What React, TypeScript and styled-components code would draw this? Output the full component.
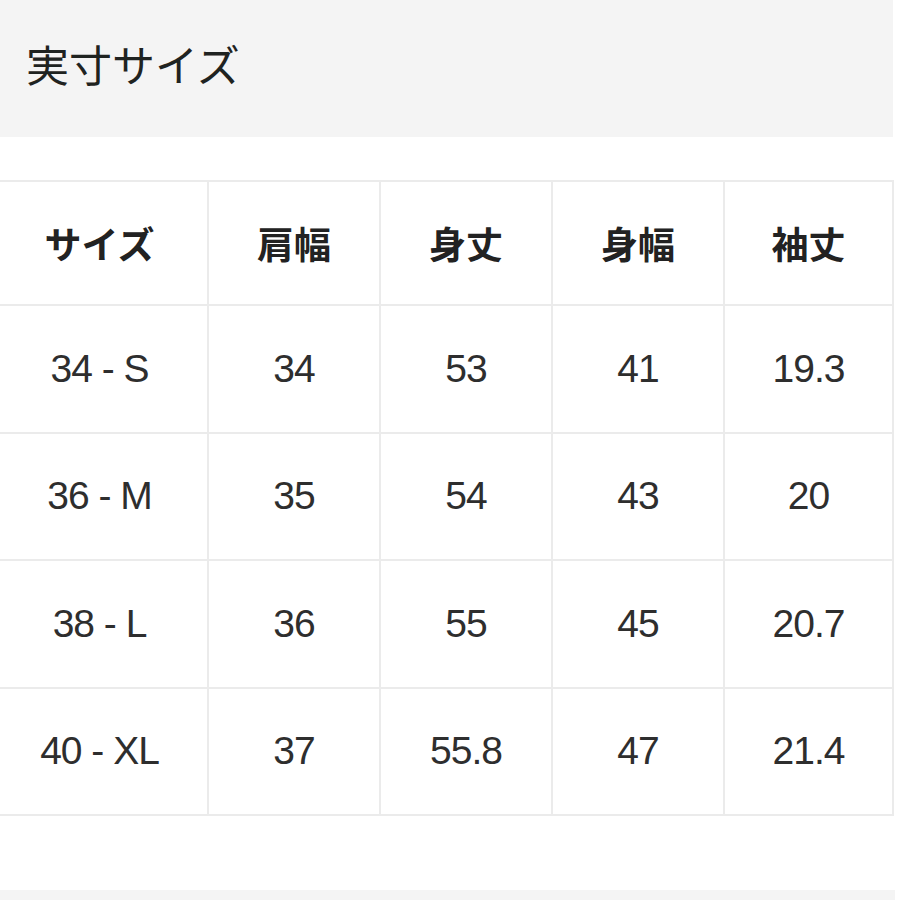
import React from "react";
import styled, { createGlobalStyle } from "styled-components";

const Global = createGlobalStyle`
  html, body {
    margin: 0;
    padding: 0;
    background: #ffffff;
    overflow-x: hidden;
  }
  body {
    font-family: "Liberation Sans", "Noto Sans CJK JP", sans-serif;
  }
`;

const Page = styled.div`
  width: 900px;
  min-height: 900px;
  overflow: hidden;
  display: flex;
  flex-direction: column;
`;

const TitleBar = styled.div`
  width: 893px;
  height: 137px;
  background: #f4f4f4;
  padding-left: 26px;
  padding-bottom: 12px;
  box-sizing: border-box;
  display: flex;
  align-items: center;
`;

const Title = styled.h1`
  margin: 0;
  font-family: "Noto Sans CJK JP", sans-serif;
  font-weight: 400;
  font-size: 43px;
  letter-spacing: 0px;
  color: #1f2321;
`;

const Table = styled.div`
  margin-top: 43px;
  margin-left: -14px;
  width: 908px;
  box-sizing: border-box;
  display: grid;
  grid-template-columns: 219px 170px 170px 170px 167px;
  grid-template-rows: 122px repeat(4, 125.5px);
  gap: 2px;
  padding: 2px;
  background: #ebebeb;
`;

const Cell = styled.div<{ $head?: boolean; $first?: boolean }>`
  background: #ffffff;
  display: flex;
  align-items: center;
  justify-content: center;
  padding-left: ${(p) => (p.$first ? "4px" : "0")};
  font-family: ${(p) =>
    p.$head
      ? `"Noto Sans CJK JP", sans-serif`
      : `"Liberation Sans", "Noto Sans CJK JP", sans-serif`};
  font-weight: ${(p) => (p.$head ? 700 : 400)};
  font-size: ${(p) => (p.$head ? "37px" : "39px")};
  letter-spacing: ${(p) => (p.$head ? "0" : "-1px")};
  color: ${(p) => (p.$head ? "#222222" : "#2e2e2e")};
`;

const FooterBand = styled.div`
  margin-top: 74px;
  width: 895px;
  height: 20px;
  background: #f4f4f4;
`;

const headers = ["サイズ", "肩幅", "身丈", "身幅", "袖丈"];
const rows = [
  ["34 - S", "34", "53", "41", "19.3"],
  ["36 - M", "35", "54", "43", "20"],
  ["38 - L", "36", "55", "45", "20.7"],
  ["40 - XL", "37", "55.8", "47", "21.4"],
];

export default function App() {
  return (
    <Page>
      <Global />
      <TitleBar>
        <Title>実寸サイズ</Title>
      </TitleBar>
      <Table>
        {headers.map((h, i) => (
          <Cell key={h} $head $first={i === 0}>
            {h}
          </Cell>
        ))}
        {rows.map((r) =>
          r.map((v, i) => (
            <Cell key={r[0] + i} $first={i === 0}>
              {v}
            </Cell>
          ))
        )}
      </Table>
      <FooterBand />
    </Page>
  );
}
